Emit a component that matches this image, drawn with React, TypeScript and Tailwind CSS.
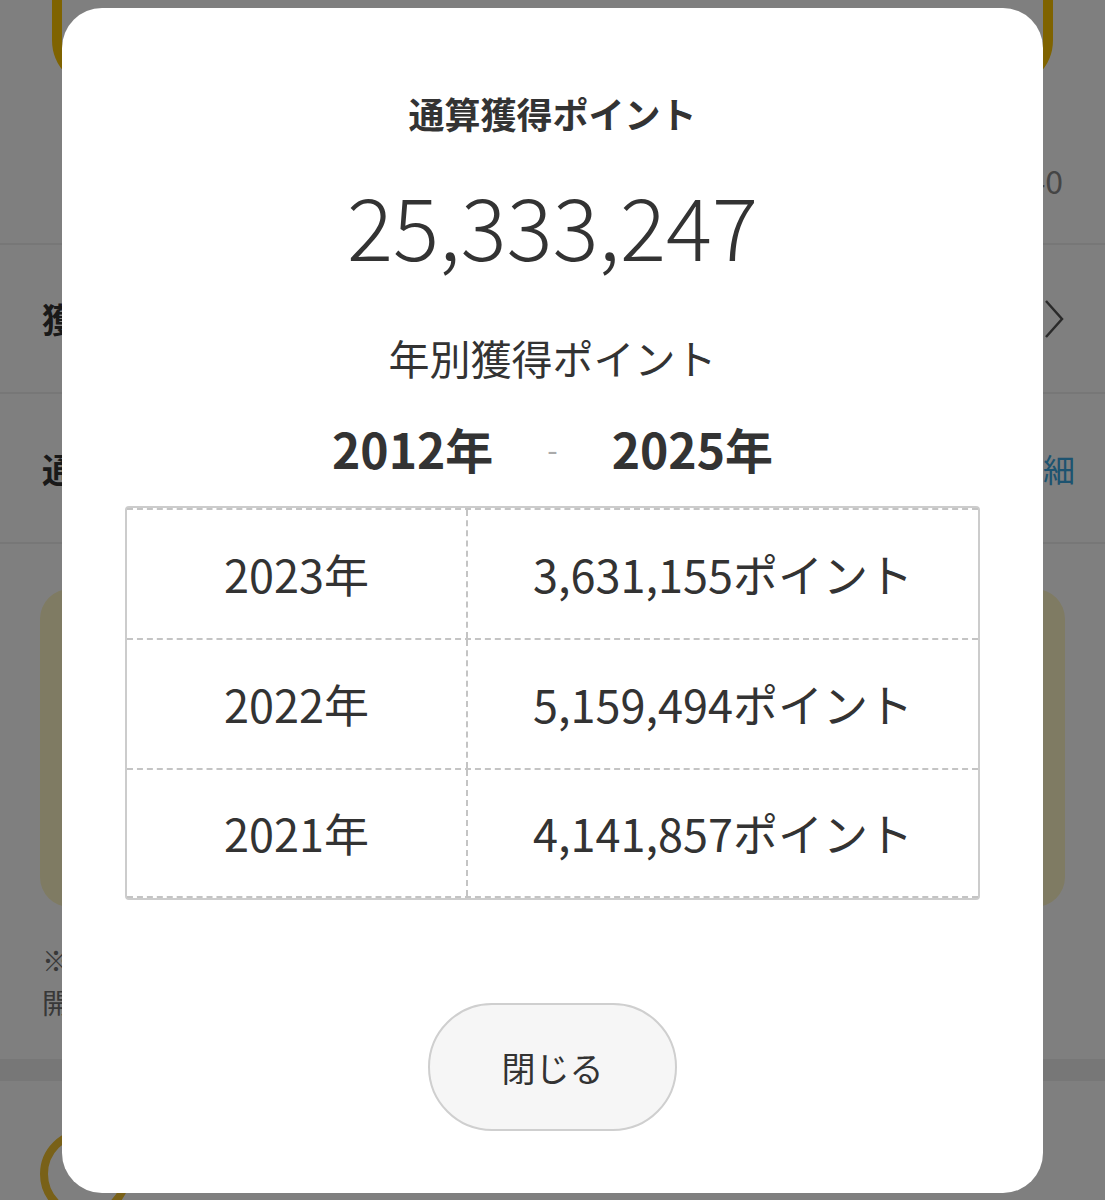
const years = [
  { year: '2023年', points: '3,631,155ポイント' },
  { year: '2022年', points: '5,159,494ポイント' },
  { year: '2021年', points: '4,141,857ポイント' },
];

function BackgroundPage() {
  return (
    <div className="flex h-[1200px] flex-col overflow-hidden bg-white text-[#333]">
      <div className="mx-[52px] -mt-[62px] h-[150px] shrink-0 rounded-[48px] border-[10px] border-[#fec600]" />
      <div className="flex h-[155px] shrink-0 items-center justify-end px-[42px] pt-[28px]">
        <span className="text-[32px] text-[#8a8a8a]">1,240</span>
      </div>
      <div className="flex h-[149px] shrink-0 items-center justify-between border-t-2 border-[#eeeeee] px-[42px]">
        <span className="text-[34px] font-bold">獲得ポイント履歴</span>
        <svg width="22" height="40" viewBox="0 0 22 40" className="-mr-[2px]" fill="none">
          <polyline points="3,2 19,20 3,38" stroke="#555" strokeWidth="2.5" />
        </svg>
      </div>
      <div className="flex h-[150px] shrink-0 items-center justify-between border-t-2 border-[#eeeeee] px-[30px] pl-[42px]">
        <span className="text-[34px] font-bold">通算獲得ポイント</span>
        <span className="text-[32px] text-[#3aa6e0]">詳細</span>
      </div>
      <div className="shrink-0 border-t-2 border-[#eeeeee] px-[40px] pt-[45px]">
        <div className="h-[318px] rounded-[30px] bg-[#fff6c6]" />
      </div>
      <div className="shrink-0 px-[42px] pt-[32px] text-[28px] leading-[42px] text-[#707070]">
        <p>※2012年以降の獲得ポイントを表示しています。ご利用</p>
        <p>開始日によって異なります。</p>
      </div>
      <div className="mt-[36px] h-[22px] shrink-0 bg-[#eeeeee]" />
      <div className="shrink-0 px-[40px] pt-[48px]">
        <div className="h-[90px] w-[90px] rounded-full border-[8px] border-[#f2c230]" />
      </div>
    </div>
  );
}

export default function App() {
  return (
    <div
      className="relative h-[1200px] w-full overflow-hidden"
      style={{ fontFamily: '"Noto Sans CJK JP", "Noto Sans", sans-serif' }}
    >
      <BackgroundPage />
      <div className="absolute inset-0 bg-black/50" />
      <div className="absolute left-[62px] top-[8px] flex h-[1185px] w-[981px] flex-col items-center rounded-[40px] bg-white pt-[80px] text-[#333]">
        <h2 className="text-[36px] font-bold leading-[50px]">通算獲得ポイント</h2>
        <p className="mt-[36px] text-[86px] font-light leading-[100px]">25,333,247</p>
        <p className="mt-[55px] text-[41px] leading-[56px]">年別獲得ポイント</p>
        <div className="mt-[31px] flex items-center text-[48px] font-bold leading-[64px]">
          <span>2012年</span>
          <span className="mx-[54px] text-[30px] font-normal text-[#aaa]">-</span>
          <span>2025年</span>
        </div>
        <div className="mt-[26px] w-[855px] rounded-[4px] border-2 border-[#cccccc]">
          {years.map((row, i) => (
            <div
              key={row.year}
              className={`flex h-[130px] border-t-2 border-dashed border-[#c4c4c4] ${
                i === years.length - 1 ? 'border-b-2' : ''
              }`}
            >
              <div className="flex w-[341px] items-center justify-center border-r-2 border-dashed border-[#c4c4c4] text-[45px]">
                {row.year}
              </div>
              <div className="flex flex-1 items-center justify-center text-[45px]">{row.points}</div>
            </div>
          ))}
        </div>
        <button className="mt-[103px] flex h-[128px] w-[249px] items-center justify-center rounded-full border-2 border-[#cfcfcf] bg-[#f6f6f6] text-[34px] text-[#333]">
          閉じる
        </button>
      </div>
    </div>
  );
}
